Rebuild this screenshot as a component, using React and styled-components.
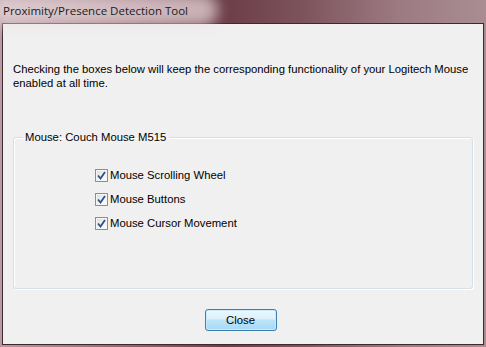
import React from "react";
import styled, { createGlobalStyle } from "styled-components";

const GlobalStyle = createGlobalStyle`
  html, body {
    margin: 0;
    padding: 0;
    background: #ffffff;
  }
  body {
    font-family: "Liberation Sans", Arial, sans-serif;
  }
`;

const Window = styled.div`
  width: 486px;
  height: 347px;
  display: flex;
  flex-direction: column;
  background: linear-gradient(90deg, #b79aa2 0%, #8b5f68 30%, #6c3d47 46%, #7d535b 62%, #9c7a82 82%, #a98d93 100%);
  overflow: hidden;
`;

const TitleBar = styled.div`
  height: 23px;
  display: flex;
  align-items: center;
  padding-left: 3px;
  position: relative;
`;

const TitleGlow = styled.div`
  position: absolute;
  left: -10px;
  top: -6px;
  width: 228px;
  height: 32px;
  border-radius: 16px;
  background: rgba(236, 224, 226, 0.7);
  filter: blur(7px);
`;

const TitleText = styled.span`
  position: relative;
  font-family: "Open Sans", sans-serif;
  font-size: 11.5px;
  color: #1a1a1a;
  margin-top: -2px;
`;

const Panel = styled.div`
  flex: 1;
  margin: 0 2px 2px 2px;
  border: 1px solid #3e2a2e;
  background: #f0f0f0;
  display: flex;
  flex-direction: column;
  padding: 38px 10px 0 10px;
  box-sizing: border-box;
`;

const Intro = styled.p`
  margin: 0;
  font-size: 11.3px;
  line-height: 14px;
  color: #000;
`;

const Group = styled.fieldset`
  margin: 41px 0 0 0;
  padding: 0;
  height: 158px;
  box-sizing: border-box;
  border: 1px solid #d5dfe5;
  border-radius: 3px;
  box-shadow: inset 1px 1px 0 #ffffff, 1px 1px 0 #ffffff;
`;

const Legend = styled.legend`
  margin-left: 9px;
  padding: 0 3px 0 2px;
  font-size: 11.3px;
  color: #000;
`;

const OptionList = styled.div`
  display: flex;
  flex-direction: column;
  gap: 10px;
  padding: 25px 0 0 81px;
`;

const Option = styled.label`
  display: flex;
  align-items: center;
  gap: 2px;
  font-size: 11.3px;
  color: #000;
  height: 14px;
`;

const Box = styled.span`
  width: 11px;
  height: 11px;
  border: 1px solid #8e8f8f;
  background: linear-gradient(135deg, #dcdcdc 0%, #f5f5f5 60%, #ffffff 100%);
  box-shadow: inset 0 0 0 1px #f4f4f4;
  display: flex;
  align-items: center;
  justify-content: center;
`;

const Footer = styled.div`
  flex: 1;
  display: flex;
  justify-content: center;
  align-items: flex-start;
  padding-top: 20px;
`;

const Button = styled.button`
  width: 72px;
  height: 22px;
  margin-left: -5px;
  border: 1px solid #3c7fb1;
  border-radius: 3px;
  background: linear-gradient(180deg, #ecf7fd 0%, #dcf0fc 45%, #bde4f9 50%, #a7d9f5 100%);
  box-shadow: inset 0 0 0 1px #c8eafc;
  font-family: "Liberation Sans", Arial, sans-serif;
  font-size: 11.3px;
  color: #000;
  padding: 0;
`;

const Check = () => (
  <svg width="9" height="9" viewBox="0 0 9 9">
    <path d="M1 4.5 L3.5 7.5 L8 1" fill="none" stroke="#2d4e8f" strokeWidth="1.8" />
  </svg>
);

const options = ["Mouse Scrolling Wheel", "Mouse Buttons", "Mouse Cursor Movement"];

export default function App() {
  return (
    <>
      <GlobalStyle />
      <Window>
        <TitleBar>
          <TitleGlow />
          <TitleText>Proximity/Presence Detection Tool</TitleText>
        </TitleBar>
        <Panel>
          <Intro>
            Checking the boxes below will keep the corresponding functionality of your Logitech Mouse
            <br />
            enabled at all time.
          </Intro>
          <Group>
            <Legend>Mouse: Couch Mouse M515</Legend>
            <OptionList>
              {options.map((o) => (
                <Option key={o}>
                  <Box>
                    <Check />
                  </Box>
                  {o}
                </Option>
              ))}
            </OptionList>
          </Group>
          <Footer>
            <Button>Close</Button>
          </Footer>
        </Panel>
      </Window>
    </>
  );
}
